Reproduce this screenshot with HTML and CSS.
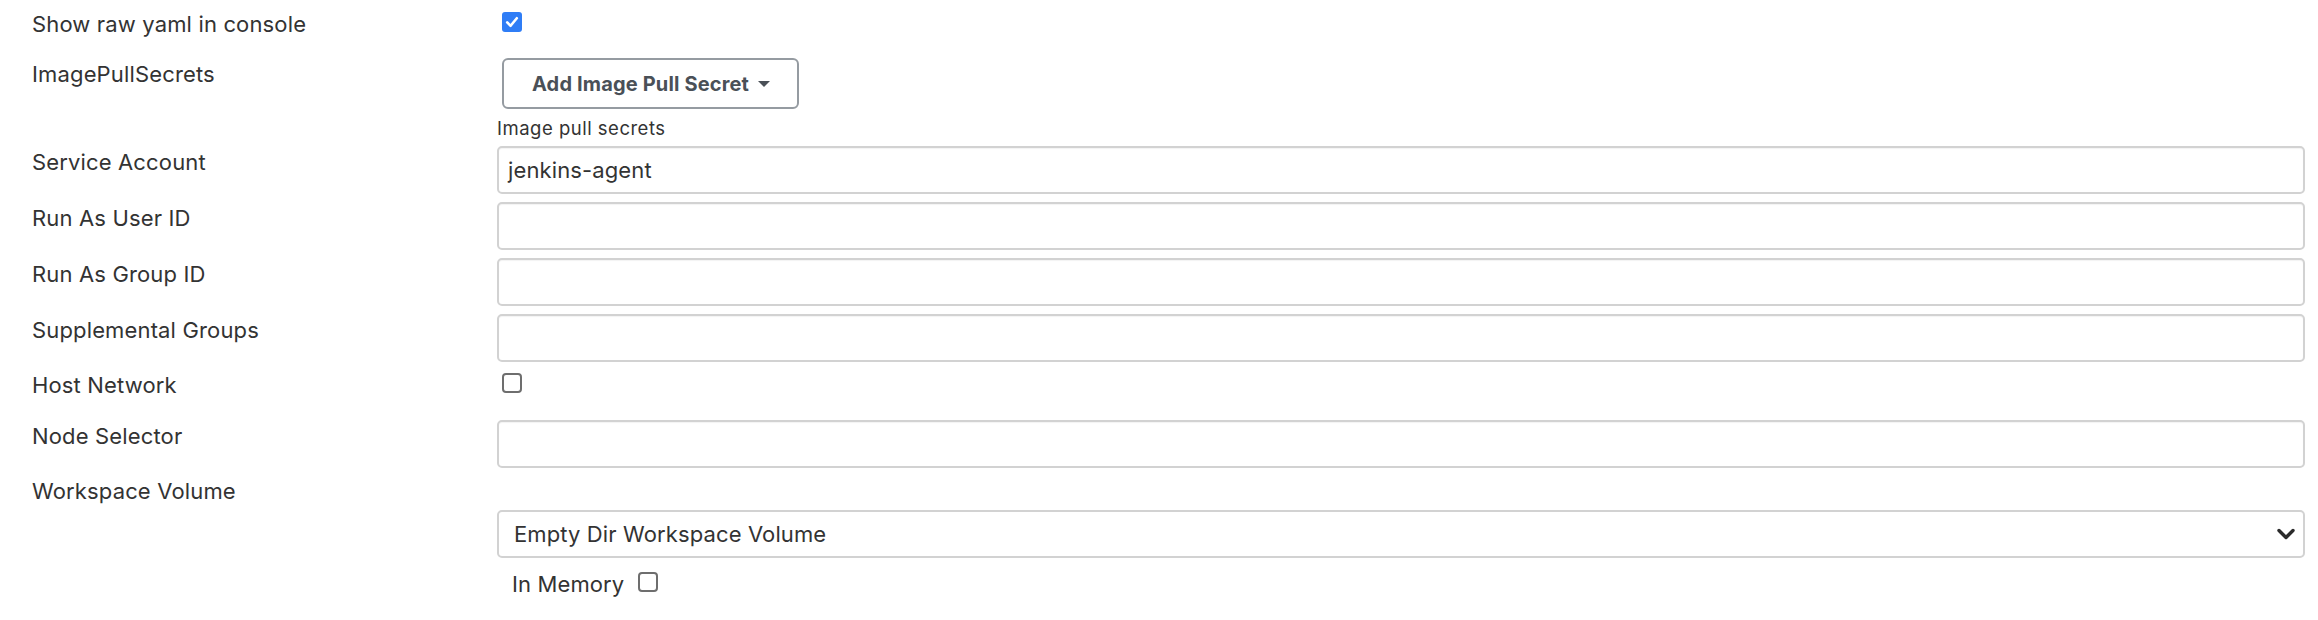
FILE: index.html
```html
<!DOCTYPE html>
<html>
<head>
<meta charset="utf-8">
<link rel="stylesheet" href="styles.css">
</head>
<body>
<form class="form">
  <div class="row row-yaml">
    <div class="label">Show raw yaml in console</div>
    <div class="control"><span class="cb cb-on"><svg viewBox="0 0 20 20" width="20" height="20"><path d="M5.2 10.4 L8.6 13.8 L14.8 6.2" fill="none" stroke="#fff" stroke-width="2.6" stroke-linecap="round" stroke-linejoin="round"/></svg></span></div>
  </div>
  <div class="row row-ips">
    <div class="label">ImagePullSecrets</div>
    <div class="control">
      <button type="button" class="btn">Add Image Pull Secret<span class="caret"></span></button>
      <div class="help">Image pull secrets</div>
    </div>
  </div>
  <div class="row row-input">
    <div class="label">Service Account</div>
    <div class="control"><div class="input">jenkins-agent</div></div>
  </div>
  <div class="row row-input">
    <div class="label">Run As User ID</div>
    <div class="control"><div class="input"></div></div>
  </div>
  <div class="row row-input">
    <div class="label">Run As Group ID</div>
    <div class="control"><div class="input"></div></div>
  </div>
  <div class="row row-input">
    <div class="label">Supplemental Groups</div>
    <div class="control"><div class="input"></div></div>
  </div>
  <div class="row row-host">
    <div class="label">Host Network</div>
    <div class="control"><span class="cb"></span></div>
  </div>
  <div class="row row-node">
    <div class="label">Node Selector</div>
    <div class="control"><div class="input"></div></div>
  </div>
  <div class="row row-ws">
    <div class="label">Workspace Volume</div>
    <div class="control"></div>
  </div>
  <div class="row row-select">
    <div class="label"></div>
    <div class="control">
      <div class="select"><span>Empty Dir Workspace Volume</span><svg class="chev" viewBox="0 0 18 13" width="18" height="13"><path d="M2 2.5 L9 9.5 L16 2.5" fill="none" stroke="#2b2b2b" stroke-width="3.4" stroke-linecap="round" stroke-linejoin="round"/></svg></div>
    </div>
  </div>
  <div class="row row-mem">
    <div class="label"></div>
    <div class="control"><div class="mem"><span class="mem-label">In Memory</span><span class="cb"></span></div></div>
  </div>
</form>
</body>
</html>
```

FILE: styles.css
```css
html, body {
  margin: 0;
  padding: 0;
  background: #ffffff;
}

body {
  font-family: Inter, "Noto Sans", "Liberation Sans", sans-serif;
  color: #333333;
}

.form {
  display: flex;
  flex-direction: column;
  padding: 8px 13px 0 32px;
}

.row {
  display: grid;
  grid-template-columns: 465px 1fr;
  align-items: start;
}

.label {
  font-size: 22px;
  letter-spacing: 0.15px;
  line-height: 32px;
  color: #333333;
  white-space: nowrap;
}

.control {
  min-width: 0;
}

.cb {
  display: block;
  width: 16px;
  height: 16px;
  margin: 4px 0 0 5px;
  border: 2px solid #6e6e6e;
  border-radius: 4px;
  background: #fff;
}

.cb-on {
  width: 20px;
  height: 20px;
  border: none;
  background: #2f7df6;
  border-radius: 3px;
}

.cb-on svg {
  display: block;
}

.row-ips {
  margin-top: 18px;
}

.btn {
  display: flex;
  align-items: center;
  height: 51px;
  width: 297px;
  margin-left: 5px;
  padding: 0 0 0 28px;
  border: 2px solid #959ba1;
  border-radius: 6px;
  background: #ffffff;
  font-family: Inter, "Noto Sans", "Liberation Sans", sans-serif;
  font-size: 20px;
  letter-spacing: 0.15px;
  font-weight: 700;
  color: #4a5057;
}

.caret {
  display: inline-block;
  width: 0;
  height: 0;
  margin-left: 9px;
  border-left: 6px solid transparent;
  border-right: 6px solid transparent;
  border-top: 6px solid #4a5057;
}

.help {
  margin-top: 7px;
  font-size: 18.5px;
  letter-spacing: 0.5px;
  line-height: 24px;
  color: #333333;
}

.row-input {
  margin-top: 8px;
}

.row-ips + .row-input {
  margin-top: 6px;
}

.input {
  box-sizing: border-box;
  height: 48px;
  border: 2px solid #d2d2d2;
  border-radius: 5px;
  box-shadow: inset 0 1px 1px rgba(0, 0, 0, 0.05);
  padding: 0 9px;
  font-size: 22px;
  letter-spacing: 0.12px;
  line-height: 44px;
  color: #333333;
}

.row-host {
  margin-top: 7px;
}

.row-node {
  margin-top: 19px;
}

.row-ws {
  margin-top: 7px;
}

.row-select {
  margin-top: 3px;
}

.select {
  box-sizing: border-box;
  height: 48px;
  display: flex;
  align-items: center;
  justify-content: space-between;
  border: 2px solid #d2d2d2;
  border-radius: 5px;
  padding: 0 8px 0 15px;
  font-size: 22px;
  letter-spacing: 0.12px;
  color: #333333;
}

.chev {
  display: block;
}

.row-mem {
  margin-top: 10px;
}

.mem {
  display: flex;
  align-items: flex-start;
  padding-left: 15px;
}

.mem-label {
  font-size: 22px;
  letter-spacing: 0.12px;
  line-height: 32px;
}

.mem .cb {
  margin: 4px 0 0 14px;
}
```
